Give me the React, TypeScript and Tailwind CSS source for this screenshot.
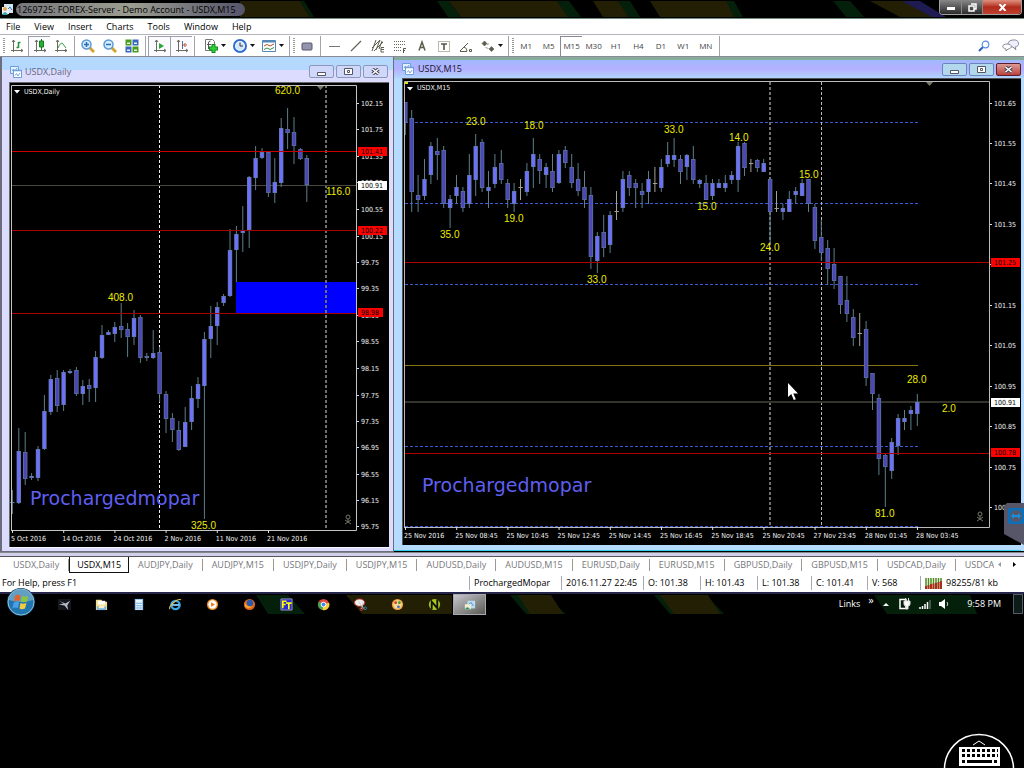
import React from 'react';
import clsx from 'clsx';

type CandleRow = [high: number, top: number, bottom: number, low: number, kind: 'u' | 'd' | 'x'];

const dailyCandles: CandleRow[] = [
    [490, 502, 503, 514, 'u'], [428, 451, 503, 504, 'u'], [432, 452, 479, 485, 'd'], [473, 476, 478, 480, 'u'],
    [446, 449, 478, 481, 'u'], [395, 411, 449, 450, 'u'], [375, 379, 412, 415, 'u'], [370, 378, 406, 412, 'd'],
    [370, 372, 405, 411, 'u'], [369, 371, 373, 374, 'u'], [367, 370, 394, 396, 'd'], [380, 386, 394, 405, 'u'],
    [379, 385, 389, 402, 'd'], [351, 357, 388, 402, 'u'], [325, 335, 358, 359, 'u'], [330, 332, 335, 335, 'u'],
    [322, 327, 334, 342, 'u'], [303, 326, 330, 338, 'd'], [323, 329, 337, 357, 'd'], [310, 318, 337, 345, 'u'],
    [315, 317, 358, 363, 'd'], [353, 356, 358, 361, 'd'], [330, 353, 358, 359, 'u'], [347, 352, 394, 402, 'd'],
    [391, 394, 419, 433, 'd'], [413, 418, 430, 442, 'd'], [421, 430, 450, 451, 'd'], [407, 422, 447, 447, 'u'],
    [386, 398, 422, 430, 'u'], [377, 384, 399, 408, 'u'], [332, 339, 386, 519, 'u'], [306, 326, 339, 358, 'u'],
    [302, 307, 326, 345, 'u'], [294, 296, 303, 306, 'u'], [229, 250, 296, 297, 'u'], [226, 234, 250, 282, 'u'],
    [206, 230, 233, 252, 'u'], [176, 177, 230, 248, 'u'], [146, 158, 178, 190, 'u'], [148, 152, 158, 159, 'u'],
    [151, 152, 193, 197, 'd'], [158, 182, 193, 203, 'u'], [118, 128, 183, 187, 'u'], [108, 129, 133, 149, 'd'],
    [117, 132, 146, 164, 'd'], [148, 149, 159, 160, 'd'], [155, 158, 185, 202, 'd'],
];

const m15Candles: CandleRow[] = [
    [102, 102, 122, 135, 'd'], [110, 118, 192, 212, 'd'], [175, 195, 200, 212, 'd'], [159, 179, 196, 200, 'u'],
    [142, 146, 175, 184, 'u'], [138, 151, 155, 180, 'd'], [146, 150, 204, 208, 'd'], [195, 199, 208, 228, 'u'],
    [175, 187, 196, 204, 'u'], [187, 191, 208, 212, 'd'], [154, 175, 204, 208, 'u'], [134, 146, 180, 196, 'u'],
    [139, 142, 188, 192, 'd'], [171, 187, 191, 208, 'u'], [154, 167, 184, 188, 'u'], [150, 163, 180, 184, 'd'],
    [179, 183, 200, 208, 'd'], [183, 191, 204, 212, 'u'], [179, 187, 187, 200, 'x'], [163, 171, 192, 196, 'u'],
    [138, 154, 167, 188, 'u'], [154, 159, 171, 184, 'd'], [163, 167, 175, 188, 'u'], [154, 171, 188, 192, 'd'],
    [150, 154, 183, 184, 'u'], [146, 150, 163, 168, 'd'], [154, 167, 183, 188, 'd'], [163, 179, 191, 196, 'd'],
    [171, 187, 200, 208, 'd'], [187, 195, 257, 269, 'd'], [232, 236, 261, 273, 'u'], [215, 232, 248, 257, 'd'],
    [211, 215, 245, 253, 'u'], [191, 211, 211, 220, 'x'], [171, 179, 208, 212, 'u'], [171, 175, 188, 196, 'd'],
    [179, 183, 188, 208, 'd'], [183, 191, 195, 208, 'd'], [171, 179, 192, 204, 'u'], [167, 183, 183, 192, 'x'],
    [159, 167, 188, 192, 'u'], [142, 155, 164, 167, 'u'], [138, 155, 160, 167, 'u'], [155, 159, 172, 184, 'd'],
    [154, 155, 167, 180, 'u'], [146, 159, 180, 184, 'd'], [179, 180, 184, 188, 'u'], [175, 183, 200, 200, 'd'],
    [179, 183, 196, 200, 'u'], [179, 183, 188, 188, 'u'], [175, 183, 188, 192, 'u'], [171, 175, 180, 184, 'u'],
    [142, 146, 180, 192, 'u'], [142, 143, 168, 176, 'd'], [159, 163, 163, 172, 'x'], [159, 160, 168, 172, 'd'],
    [159, 163, 172, 172, 'u'], [179, 179, 212, 242, 'd'], [191, 208, 208, 212, 'x'], [204, 208, 212, 220, 'u'],
    [191, 199, 212, 212, 'u'], [187, 191, 195, 204, 'u'], [179, 183, 196, 196, 'u'], [179, 179, 204, 212, 'd'],
    [204, 207, 241, 249, 'd'], [220, 237, 253, 261, 'd'], [240, 248, 269, 285, 'd'], [248, 264, 281, 289, 'd'],
    [276, 276, 305, 314, 'd'], [276, 300, 314, 322, 'd'], [309, 317, 338, 346, 'd'], [313, 333, 333, 346, 'x'],
    [321, 329, 378, 386, 'd'], [373, 373, 394, 410, 'd'], [394, 398, 459, 475, 'd'], [454, 455, 467, 507, 'd'],
    [438, 442, 471, 479, 'u'], [414, 418, 446, 455, 'u'], [410, 418, 422, 430, 'u'], [406, 410, 414, 430, 'u'],
    [394, 402, 414, 426, 'u'],
];

type Label = [text: string, x: number, y: number];

const dailyPrices: [string, number][] = [
    ['102.15', 103], ['101.75', 129], ['101.35', 156], ['100.95', 182], ['100.55', 209], ['100.15', 236],
    ['99.75', 262], ['99.35', 288], ['98.95', 315], ['98.55', 341], ['98.15', 368], ['97.75', 395],
    ['97.35', 421], ['96.95', 447], ['96.55', 474], ['96.15', 500], ['95.75', 526],
];

const m15Prices: [string, number][] = [
    ['101.65', 103], ['101.55', 143], ['101.45', 183], ['101.35', 224], ['101.25', 264], ['101.15', 305],
    ['101.05', 345], ['100.95', 386], ['100.85', 426], ['100.75', 467], ['100.65', 507],
];

const dailyDates = ['5 Oct 2016', '14 Oct 2016', '24 Oct 2016', '2 Nov 2016', '11 Nov 2016', '21 Nov 2016'];
const m15Dates = [
    '25 Nov 2016', '25 Nov 08:45', '25 Nov 10:45', '25 Nov 12:45', '25 Nov 14:45', '25 Nov 16:45',
    '25 Nov 18:45', '25 Nov 20:45', '27 Nov 23:45', '28 Nov 01:45', '28 Nov 03:45',
];

const dailySwings: Label[] = [
    ['408.0', 108, 301], ['325.0', 191, 529], ['620.0', 275, 94], ['116.0', 326, 195],
];
const m15Swings: Label[] = [
    ['35.0', 440, 238], ['23.0', 466, 125], ['19.0', 504, 222], ['18.0', 524, 129], ['33.0', 587, 283],
    ['33.0', 664, 133], ['15.0', 697, 210], ['14.0', 729, 141], ['24.0', 760, 251], ['15.0', 799, 178],
    ['81.0', 875, 517], ['28.0', 907, 383], ['2.0', 942, 412],
];

const Candles = ({ rows, start }: { rows: CandleRow[]; start: number }) => (
    <g>
        {rows.map(([high, top, bottom, low, kind], i) => {
            const x = start + i * 6.4;
            if (kind === 'x') {
                return <path key={i} d={`M${x} ${high}V${low}M${x - 2} ${top + 0.5}h4.4`} stroke="#a3a392" />;
            }
            const height = Math.max(bottom - top, 1);
            return (
                <g key={i}>
                    <path d={`M${x} ${high}V${low}`} stroke="#5d7e8c" />
                    <rect x={x - 2.2} y={top} width={4.4} height={height} fill="#5c7b98" />
                    <rect x={x - 1.5} y={top + 0.6} width={3} height={Math.max(height - 1.2, 0.5)} fill={kind === 'u' ? '#6f6fff' : '#4c46b8'} />
                </g>
            );
        })}
    </g>
);

const PriceAxis = ({ prices, x }: { prices: [string, number][]; x: number }) => (
    <g fill="#f4f4f4" fontSize={7}>
        {prices.map(([text, y]) => (
            <g key={text}>
                <path d={`M${x} ${y + 0.5}h2`} stroke="#ddd" />
                <text x={x + 4} y={y + 3}>{text}</text>
            </g>
        ))}
    </g>
);

const PriceTag = ({ x, y, text, width = 29, white }: { x: number; y: number; text: string; width?: number; white?: boolean }) => (
    <g>
        <rect x={x} y={y - 4} width={width} height={9} fill={white ? '#fff' : '#f00'} />
        <text x={x + 3} y={y + 3} fontSize={7} fill="#000">{text}</text>
    </g>
);

const DateAxis = ({ dates, x, y }: { dates: string[]; x: number; y: number }) => (
    <g fill="#f4f4f4" fontSize={7}>
        {dates.map((text, i) => (
            <g key={text}>
                <path d={`M${x + 0.5 + i * 51.2} ${y}v3`} stroke="#ddd" />
                <text x={x - 1 + i * 51.2} y={y + 11}>{text}</text>
            </g>
        ))}
    </g>
);

const Swings = ({ labels }: { labels: Label[] }) => (
    <g fill="#ecec00" fontSize={10} className="font-['Liberation_Sans',Arial,sans-serif]">
        {labels.map(([text, x, y]) => <text key={`${text}${x}`} x={x} y={y}>{text}</text>)}
    </g>
);

const Skull = ({ x, y }: { x: number; y: number }) => (
    <g stroke="#77776a" fill="none">
        <circle cx={x} cy={y} r={2} />
        <path d={`M${x - 3} ${y + 3}l6 4M${x + 3} ${y + 3}l-6 4M${x - 1} ${y + 3}h2`} />
    </g>
);

const chartClass = "block h-auto w-full bg-black font-['DejaVu_Sans_Condensed','DejaVu_Sans',Tahoma,sans-serif]";

const DailyChart = () => (
    <svg viewBox="9 82 380 466" className={chartClass} role="img" aria-label="USDX daily chart">
        <path d="M9 82.5H389M9.5 82V548" stroke="#686868" />
        <path d="M9 547.5H389" stroke="#f4f4ff" />
        <rect x={236} y={282} width={120} height={31} fill="#00f" />
        <path d="M159.5 85V530" stroke="#eee" strokeDasharray="3 2" />
        <path d="M326 85V530" stroke="#707070" strokeWidth={2} strokeDasharray="3 2" />
        <path d="M12 185.5H356" stroke="#4a4a42" />
        <Candles rows={dailyCandles} start={12.4} />
        <path d="M12 151.5H356" stroke="#c80000" />
        <path d="M12 230.5H356M12 313.5H356" stroke="#a80000" />
        <path d="M11.5 530V85.5H356.5V530.5H11" fill="none" stroke="#c4c4c4" />
        <path d="M317 86h7l-3.500 4z" fill="#77776a" />
        <path d="M14 90h6l-3 3.500z" fill="#fff" />
        <text x={24} y={94} fontSize={7} fill="#f4f4f4">USDX,Daily</text>
        <PriceAxis prices={dailyPrices} x={357} />
        <PriceTag x={358} y={151} text="101.41" />
        <PriceTag x={358} y={185} text="100.91" white />
        <PriceTag x={358} y={230} text="100.22" />
        <PriceTag x={358} y={312} text="98.98" width={25} />
        <DateAxis dates={dailyDates} x={12} y={530} />
        <Swings labels={dailySwings} />
        <text x={30} y={505} fontSize={19} fill="#5f5ff0" className="font-['DejaVu_Sans',Verdana,sans-serif]">Prochargedmopar</text>
        <Skull x={348} y={517} />
    </svg>
);

const M15Chart = () => (
    <svg viewBox="402 78 619 467" className={chartClass} role="img" aria-label="USDX M15 chart">
        <path d="M402 78.500H1021M402.500 78V545" stroke="#555" />
        <path d="M405 122.5H918M405 203.5H918M405 284.5H918M405 446.500H918M405 526.500H918" stroke="#3a5ad8" strokeDasharray="3 2" />
        <path d="M770 82V527" stroke="#707070" strokeWidth={2} strokeDasharray="3 2" />
        <path d="M821.5 82V527" stroke="#bbb" strokeDasharray="3 2" />
        <path d="M405 365.5H918" stroke="#857312" />
        <path d="M405 402H989" stroke="#33332a" strokeWidth={2} />
        <clipPath id="m15-plot"><path d="M405 82h584v445H405z" /></clipPath>
        <g clipPath="url(#m15-plot)">
            <Candles rows={m15Candles} start={405.3} />
        </g>
        <path d="M405 262.5H989M405 453.5H989" stroke="#b00000" />
        <path d="M404.5 527V81.5H989.5V527.5H404" fill="none" stroke="#bbb" />
        <path d="M926 82h7l-3.500 4z" fill="#77776a" />
        <path d="M407 87h6l-3 3.500z" fill="#fff" />
        <path d="M405 83h3" stroke="#e2e200" strokeWidth={2} />
        <text x={417} y={90} fontSize={7} fill="#f4f4f4">USDX,M15</text>
        <PriceAxis prices={m15Prices} x={990} />
        <PriceTag x={991} y={262} text="101.25" />
        <PriceTag x={991} y={402} text="100.91" white />
        <PriceTag x={991} y={452} text="100.78" />
        <DateAxis dates={m15Dates} x={405} y={527} />
        <Swings labels={m15Swings} />
        <text x={422} y={492} fontSize={19} fill="#5f5ff0" className="font-['DejaVu_Sans',Verdana,sans-serif]">Prochargedmopar</text>
        <Skull x={980} y={514} />
        <path d="M788 383v14l3.300-3 2.500 6 2-.8-2.500-5.700h4.700z" fill="#fff" />
    </svg>
);

const ChartIcon = () => (
    <svg viewBox="0 0 12 12" className="size-3 shrink-0">
        <path d="M.5.500h8v7h-8z" fill="#dff0ff" stroke="#6a9fdc" />
        <path d="M3.500 4.500h8v7h-8z" fill="#fff" stroke="#6a9fdc" />
        <path d="M3 4.500h9" stroke="#6a9fdc" strokeWidth={1.500} />
        <path d="M2 5l1.500-2L5 5l2-3M5 9.500l1.500-2 1.500 2.500 2-3" fill="none" stroke="#7aa4d0" />
    </svg>
);

const WindowButtons = ({ active }: { active?: boolean }) => {
    const base = 'flex h-[13px] w-[25px] items-center justify-center rounded-xs border';
    const plain = active ? 'border-[#6a86b8] bg-[#b2d8ee]' : 'border-[#8c98b8] bg-[#cfd8fb]';
    return (
        <div className="flex gap-[2px]">
            <button aria-label="Minimize" className={clsx(base, plain, 'items-end pb-[1px]')}>
                <svg viewBox="0 0 9 4" className="h-[4px] w-[9px]"><path d="M.5.500h8v3h-8z" fill="#fff" stroke="#556" /></svg>
            </button>
            <button aria-label="Maximize" className={clsx(base, plain)}>
                <svg viewBox="0 0 9 7" className="h-[7px] w-[9px]"><path d="M.5.500h8v6h-8zM3.500 2.500h2v2h-2z" fill="#fff" stroke="#556" /></svg>
            </button>
            <button aria-label="Close" className={clsx(base, active ? 'border-[#5a2030] bg-linear-to-b from-[#dc9a94] to-[#b84040]' : plain)}>
                <svg viewBox="0 0 9 7" className="h-[7px] w-[9px]">
                    <path d="M1.500 1l6 5M7.500 1l-6 5" stroke="#445" strokeWidth={3.500} />
                    <path d="M1.500 1l6 5M7.500 1l-6 5" stroke="#fff" strokeWidth={1.500} />
                </svg>
            </button>
        </div>
    );
};

const TitleBar = () => (
    <header className="relative flex h-[19px] items-start border-b border-[#6d8a7a] bg-black">
        <svg viewBox="0 0 1024 17" preserveAspectRatio="none" className="absolute inset-0 h-[17px] w-full">
            <path d="M240 1h60l10 16h-70z" fill="#231f05" />
            <path d="M300 1h4l10 16h-4z" fill="#04200a" />
            <path d="M437 1h12l12 16h-13z" fill="#04200a" />
            <path d="M449 1h108l12 16h-108z" fill="#231f05" />
            <path d="M557 1h12l12 16h-13z" fill="#04200a" />
            <path d="M593 1h25l15 16h-30z" fill="#231f05" />
            <path d="M618 1h12l10 16h-12z" fill="#04200a" />
            <path d="M650 1h80l10 16h-80z" fill="#231f05" />
            <path d="M726 1h8l9 16h-9z" fill="#04200a" />
            <path d="M833 1h17l14 16h-18z" fill="#04200a" />
            <path d="M870 1h40l30 16h-40z" fill="#231f05" />
            <path d="M902 1h18l26 16h-14z" fill="#1d1b52" />
        </svg>
        <div className="relative flex min-w-0 flex-1 items-center gap-[2px] pt-[3px] pl-[2px]">
            <svg viewBox="0 0 12 12" className="size-3 shrink-0">
                <path d="M2 0h9v9H2z" fill="#cfe6f5" />
                <path d="M0 3h7v7H0z" fill="#eef" />
                <circle cx={3} cy={5} r={2} fill="#e2a548" />
                <path d="M0 11q3-6 6 0z" fill="#3a9" />
                <path d="M6 5l2-2 2 3" stroke="#47a" fill="none" />
            </svg>
            <h1 className="truncate rounded-full bg-linear-to-r from-[#77777c] via-[#9c9d90] to-[#55546a] pr-[9px] pl-[1px] text-[9px] leading-[13px] text-black">
                1269725: FOREX-Server - Demo Account - USDX,M15
            </h1>
        </div>
        <div className="relative mr-[2px] flex h-[15px] overflow-hidden rounded-b-sm border border-t-0 border-[#a0a0a0]">
            <button aria-label="Minimize" className="flex w-[22px] items-end justify-center border-r border-[#888] bg-linear-to-b from-[#888] to-[#2c2c2c] pb-1">
                <span className="h-[3px] w-2 bg-white" />
            </button>
            <button aria-label="Restore" className="flex w-[21px] items-center justify-center border-r border-[#888] bg-linear-to-b from-[#888] to-[#2c2c2c]">
                <svg viewBox="0 0 9 9" className="size-[9px]"><path d="M3 1h5v5H6M1 3h5v5H1z" fill="none" stroke="#fff" strokeWidth={1.500} /></svg>
            </button>
            <button aria-label="Close" className="flex w-[38px] items-center justify-center bg-linear-to-b from-[#e09080] via-[#b02a1a] to-[#c04030]">
                <svg viewBox="0 0 9 7" className="h-[7px] w-[9px]"><path d="M1.500 0l6 7M7.500 0l-6 7" stroke="#fff" strokeWidth={2} /></svg>
            </button>
        </div>
    </header>
);

const Axes = () => <path d="M3.500 1v12M1 11.500h12M2 3l1.500-2L5 3M11 10l2 1.500-2 1.500" fill="none" stroke="#6b6b60" />;

const icons: Record<string, React.ReactNode> = {
    'Bar chart': <><Axes /><path d="M8.500 3v6M8.500 3.500h2M6.500 8.500h2" stroke="#2a8f3a" strokeWidth={1.500} /></>,
    'Candlesticks': <><Axes /><path d="M8.500 0v11" stroke="#177a22" /><path d="M6.500 2h4v6h-4z" fill="#22b034" stroke="#177a22" /></>,
    'Line chart': <><Axes /><path d="M4 9q3-7 5-4l3 4" fill="none" stroke="#3a9a4a" /></>,
    'Zoom in': <><path d="M8 8l5 5" stroke="#d3a52e" strokeWidth={3} /><circle cx={5.500} cy={5.500} r={4.500} fill="#d5edff" stroke="#5b9ad4" strokeWidth={1.500} /><path d="M3 5.500h5M5.500 3v5" stroke="#2b6cb8" strokeWidth={1.500} /></>,
    'Zoom out': <><path d="M8 8l5 5" stroke="#d3a52e" strokeWidth={3} /><circle cx={5.500} cy={5.500} r={4.500} fill="#d5edff" stroke="#5b9ad4" strokeWidth={1.500} /><path d="M3 5.500h5" stroke="#2b6cb8" strokeWidth={1.500} /></>,
    'Tile windows': <><path d="M.5.500h6v6h-6zM7.500 7.500h6v6h-6z" fill="#4a9c20" /><path d="M7.500.500h6v6h-6zM.5 7.500h6v6h-6z" fill="#3a68c0" /><path d="M2 3.500h3v1.500H2zM9 3.500h3v1.500H9zM2 10.500h3V12H2zM9 10.500h3V12H9z" fill="#e8f4e8" /></>,
    'Auto scroll': <><Axes /><path d="M6 4l5 3-5 3z" fill="#27a83a" /></>,
    'Chart shift': <><Axes /><path d="M7.500 2v8" stroke="#4a6ea8" /><path d="M12 6H9M10.500 4L8.500 6l2 2" stroke="#c04a20" fill="none" /></>,
    'Indicators': <><path d="M1.500.500h7l2 2v9h-9z" fill="#fff" stroke="#777" /><path d="M4.500 10V4q0-2 2-2M3 5.500h4" stroke="#555" fill="none" /><path d="M9.500 5v9M5 9.500h9" stroke="#138a1c" strokeWidth={4} /><path d="M9.500 6v7M6 9.500h7" stroke="#2ed23a" strokeWidth={2} /></>,
    'Periods': <><circle cx={7} cy={7} r={6} fill="#fff" stroke="#2d6bcf" strokeWidth={2} /><circle cx={7} cy={7} r={4} fill="#cfe6fb" /><path d="M7 3.500V7h3" fill="none" stroke="#335" /></>,
    'Templates': <><path d="M.5 1.500h13v11H.5z" fill="#fff" stroke="#5287b8" /><path d="M1 2.500h12" stroke="#5287b8" strokeWidth={2} /><path d="M2 7l3-1.500L8 7l4-2" stroke="#b5502a" fill="none" /><path d="M2 10.500l3-1.500 3 1.500 4-2" stroke="#3a8a4a" fill="none" /></>,
    'Objects': <rect x={2} y={4} width={10} height={7} rx={1} fill="#9494ae" stroke="#55556a" />,
    'Horizontal line': <path d="M2 7.500h11" stroke="#777" />,
    'Trendline': <path d="M2 12L12 2" stroke="#66665a" strokeWidth={1.200} />,
    'Channel': <path d="M1 9l8-8M3 12l9-9M1 12l4-11M5 11L9 1M8 10l3-8M10 8.500h3M10 10.500h3M10 13h3M10 8.500v4.500" stroke="#5c5c4c" fill="none" />,
    'Fibonacci': <><path d="M1 2.500h12M1 5.500h12M1 8.500h8M1 11.500h8" stroke="#66665a" strokeDasharray="1 1" /><path d="M10.500 14V9.500H13M10 11.500h2" stroke="#55554a" fill="none" /></>,
    'Text': <path d="M4 11.500L7 3l3 8.500M5 8.500h4" stroke="#5c5c4c" strokeWidth={1.500} fill="none" />,
    'Text label': <><path d="M1.500 2.500h11v10h-11z" fill="none" stroke="#77775a" strokeDasharray="1 1" /><path d="M4 5h6M7 5v6" stroke="#55554a" strokeWidth={1.600} /></>,
    'Angle': <path d="M1 12.500h7M1 12l8-8M5 8q3 1 3 4M10.500 10.500h2v2h-2z" stroke="#5c5c4c" fill="none" />,
    'Arrows': <path d="M1 4.500l2.500-2.500L6 4.500 3.500 7zM8 10l2.500-2.500L13 10l-2.500 2.500zM6 6l2-1.500M4.500 8.500l3 1" fill="#5c5c4c" stroke="#5c5c4c" strokeWidth={0.600} />,
};

const ToolButton = ({ name, menu, pressed }: { name: string; menu?: boolean; pressed?: boolean }) => (
    <button
        aria-label={name}
        className={clsx(
            'flex h-[20px] shrink-0 items-center justify-center gap-[3px]',
            menu ? 'w-[29px]' : 'w-[22px]',
            pressed && 'border-t border-l border-[#a0a0a8] bg-[#fafaff]',
        )}
    >
        <svg viewBox="0 0 14 14" className="size-[14px]">{icons[name]}</svg>
        {menu && <svg viewBox="0 0 5 3" className="h-[3px] w-[5px]"><path d="M0 0h5L2.500 3z" fill="#111" /></svg>}
    </button>
);

const Separator = () => <div className="mx-[2px] h-[20px] w-px shrink-0 bg-[#a4a4ac]" />;
const Grip = () => <div className="mx-[1px] h-[16px] w-[2px] shrink-0 bg-[repeating-linear-gradient(#999_0_1px,#fff_1px_2px)]" />;

const Toolbar = () => (
    <div className="flex h-[22px] items-center overflow-hidden border-b border-[#8a8a94] bg-white pl-[2px]">
        <Grip />
        <ToolButton name="Bar chart" />
        <ToolButton name="Candlesticks" pressed />
        <ToolButton name="Line chart" />
        <Separator />
        <ToolButton name="Zoom in" />
        <ToolButton name="Zoom out" />
        <ToolButton name="Tile windows" />
        <Separator />
        <ToolButton name="Auto scroll" pressed />
        <ToolButton name="Chart shift" pressed />
        <Separator />
        <div className="flex pl-[3px]">
            <ToolButton name="Indicators" menu />
            <ToolButton name="Periods" menu />
            <ToolButton name="Templates" menu />
        </div>
        <Separator />
        <Grip />
        <ToolButton name="Objects" />
        <Separator />
        <ToolButton name="Horizontal line" />
        <ToolButton name="Trendline" />
        <ToolButton name="Channel" />
        <ToolButton name="Fibonacci" />
        <ToolButton name="Text" />
        <ToolButton name="Text label" />
        <ToolButton name="Angle" />
        <ToolButton name="Arrows" menu />
        <Separator />
        <Grip />
        <div className="grid w-[202px] shrink-0 grid-cols-9">
            {['M1', 'M5', 'M15', 'M30', 'H1', 'H4', 'D1', 'W1', 'MN'].map(period => (
                <button
                    key={period}
                    className={clsx(
                        'h-[20px] text-center text-[8px] text-[#444]',
                        period === 'M15' && 'border-t border-l border-[#8a8a94]',
                    )}
                >
                    {period}
                </button>
            ))}
        </div>
        <Separator />
        <div className="ml-auto flex items-center gap-[12px] pr-[5px]">
            <button aria-label="Search">
                <svg viewBox="0 0 12 12" className="size-3">
                    <path d="M1 11l4-4" stroke="#2a5fc0" strokeWidth={2} />
                    <circle cx={7.500} cy={4.500} r={3.300} fill="#fff" stroke="#5a90e4" strokeWidth={1.200} />
                </svg>
            </button>
            <button aria-label="Messages">
                <svg viewBox="0 0 17 13" className="h-[13px] w-[17px]">
                    <path d="M11 1c7-1 7 7 2 7l1 3-3-3C4 8 5 1 11 1z" fill="#eef" stroke="#8a8a98" />
                    <path d="M5 5c6 0 5 5 1 5l-2 2 0-2C-1 9 0 5 5 5z" fill="#fff" stroke="#8a8a98" />
                </svg>
            </button>
        </div>
    </div>
);

const tabs = [
    'USDX,Daily', 'USDX,M15', 'AUDJPY,Daily', 'AUDJPY,M15', 'USDJPY,Daily', 'USDJPY,M15', 'AUDUSD,Daily',
    'AUDUSD,M15', 'EURUSD,Daily', 'EURUSD,M15', 'GBPUSD,Daily', 'GBPUSD,M15', 'USDCAD,Daily', 'USDCAD,M15',
];

const ChartTabs = () => (
    <div className="flex h-[18px] items-start border-t border-[#55555c] bg-white">
        <div className="flex min-w-0 flex-1 items-center overflow-hidden pl-[4px]">
            {tabs.map(tab => (
                <button
                    key={tab}
                    className={clsx(
                        'shrink-0 text-[9px] whitespace-nowrap',
                        tab === 'USDX,M15'
                            ? 'h-[16px] border-r border-b border-l border-[#111] px-[7px] leading-[15px] text-black'
                            : 'h-[12px] border-r border-[#9a9a90] px-[9px] leading-[12px] text-[#77777c]',
                    )}
                >
                    {tab}
                </button>
            ))}
        </div>
        <div className="flex h-[15px] w-[30px] items-center justify-between pr-[8px] pl-[4px] text-black">
            <button aria-label="Scroll left"><svg viewBox="0 0 3 5" className="h-[5px] w-[3px]"><path d="M3 0v5L0 2.500z" fill="#99a" /></svg></button>
            <button aria-label="Scroll right"><svg viewBox="0 0 3 5" className="h-[5px] w-[3px]"><path d="M0 0v5l3-2.500z" fill="#000" /></svg></button>
        </div>
    </div>
);

const Cell = ({ children, className }: { children: React.ReactNode; className: string }) => (
    <span className={clsx('h-[14px] shrink-0 border-l border-[#a8a8b4] pl-[4px] whitespace-nowrap', className)}>{children}</span>
);

const StatusBar = () => (
    <footer className="flex h-[18px] items-center bg-white text-[9px] leading-[14px] text-black">
        <span className="min-w-0 flex-1 truncate pl-[2px]">For Help, press F1</span>
        <Cell className="w-[92px]">ProchargedMopar</Cell>
        <Cell className="w-[82px]">2016.11.27 22:45</Cell>
        <Cell className="w-[57px]">O: 101.38</Cell>
        <Cell className="w-[57px]">H: 101.43</Cell>
        <Cell className="w-[54px]">L: 101.38</Cell>
        <Cell className="w-[56px]">C: 101.41</Cell>
        <Cell className="w-[53px]">V: 568</Cell>
        <Cell className="flex w-[104px] items-center gap-[3px]">
            <svg viewBox="0 0 18 11" className="h-[11px] w-[18px]">
                <path d="M1 0v11M3.500 0v11M6 0v11M8.500 0v11M11 0v11M13.500 0v11M16 0v11" stroke="#4c8a1c" strokeWidth={1.500} />
                <path d="M1 8v3M3.500 7v4M6 6v5M8.500 5.500v5.500M11 5v6M13.500 4v7M16 3v8" stroke="#a83018" strokeWidth={2} />
            </svg>
            98255/81 kb
        </Cell>
    </footer>
);

const StartOrb = () => (
    <svg viewBox="0 0 30 28" className="h-[28px] w-[30px]">
        <circle cx={15} cy={14} r={14} fill="#123a5c" />
        <circle cx={15} cy={14} r={13} fill="#2276b0" stroke="#8fc0dc" />
        <path d="M3 12a12 11 0 0 1 24 0q-12 4-24 0z" fill="#7fb0cc" opacity={0.7} />
        <path d="M9 8q3-2 5.500-.5L13.500 13q-3-1-5.500.5z" fill="#e2632a" />
        <path d="M16 8q3 1.500 6 0L21 13.500q-3 1.500-6 0z" fill="#8cc63a" />
        <path d="M7.500 15q3-2 5.500-.5L12 20q-3-1-5.500.5z" fill="#4aa0e8" />
        <path d="M14.500 15q3 1.500 6 0l-1.500 5.500q-3 1.500-5.500 0z" fill="#f4cc40" />
    </svg>
);

const apps: [string, React.ReactNode][] = [
    ['Jet', <><path d="M0 1h14v12H0z" fill="#15151c" /><path d="M1 3l7 3 5-3-3 5 1 5-4-5-6-1 5-1z" fill="#b8bcc8" /></>],
    ['Explorer', <><path d="M1 2h6l1 2h5v9H1z" fill="#f2dd88" /><path d="M3 3h8v4H3z" fill="#fff" /><path d="M2 9h10v4H2z" fill="#7ab4e0" /><path d="M4 8h6v3H4z" fill="#fbf0c0" /></>],
    ['Calculator', <><path d="M3 1h9v12H3z" fill="#8fc0ee" /><path d="M4 2h7v3H4z" fill="#eaf6ff" /><path d="M4 7h7M4 9.500h7M4 12h7" stroke="#fff" strokeDasharray="2 .5" /></>],
    ['Internet Explorer', <><circle cx={7} cy={7.500} r={4.500} fill="none" stroke="#38a4ea" strokeWidth={2.500} /><path d="M3 7.500h8" stroke="#7cc8f8" strokeWidth={2} /><path d="M1 12C-1 9 9 0 13 2" stroke="#e8c040" fill="none" strokeWidth={1.200} /></>],
    ['Media Player', <><circle cx={7} cy={7} r={6} fill="#f08a20" /><circle cx={7} cy={7} r={4.500} fill="#fff" /><path d="M5.500 4.500L9.500 7l-4 2.500z" fill="#e8721a" /></>],
    ['Firefox', <><circle cx={7} cy={7} r={6} fill="#e0661c" /><circle cx={7.500} cy={5.500} r={3.500} fill="#2a5ab0" /><path d="M2 4q1 6 8 5-4 4-8 0z" fill="#f8a830" /></>],
    ['Forex Tester', <><path d="M1 1h12v12H1z" fill="#2a2ad8" stroke="#99a" /><path d="M3 11V3.500h4M3 7h3M6.500 5.500h6M9.500 5.500V12" stroke="#ff0" strokeWidth={1.800} fill="none" /></>],
    ['Chrome', <><circle cx={7} cy={7} r={6} fill="#e0463a" /><path d="M7 7L2 4a6 6 0 0 0 4 9z" fill="#3aa852" /><path d="M7 7l6-2a6 6 0 0 1-7 8z" fill="#f8cc3a" /><circle cx={7} cy={7} r={2.600} fill="#4a8af0" stroke="#fff" /></>],
    ['Snipping Tool', <><ellipse cx={6} cy={5} rx={5.500} ry={4} fill="#eee" stroke="#c03030" /><path d="M5 4l6 8M10 4L8 12" stroke="#ccc" /><circle cx={12} cy={11} r={1.500} fill="none" stroke="#38a" /><circle cx={8} cy={12} r={1.500} fill="none" stroke="#c33" /></>],
    ['Paint', <><circle cx={7} cy={7} r={6} fill="#f2a440" /><circle cx={7} cy={7} r={4.500} fill="#f8d890" /><circle cx={5} cy={5} r={1.500} fill="#d23a2a" /><circle cx={9} cy={5} r={1.500} fill="#3a9a3a" /><circle cx={8} cy={9.500} r={1.500} fill="#3a6ad0" /></>],
    ['NinjaTrader', <><circle cx={7} cy={7} r={6} fill="#a8c818" /><path d="M4 12V4l6 7V2" stroke="#111" strokeWidth={2} fill="none" /></>],
];

const Taskbar = () => (
    <nav className="relative flex h-[24px] items-start border-t-2 border-[#26264a] bg-black text-white">
        <svg viewBox="0 0 1024 22" preserveAspectRatio="none" className="absolute inset-0 h-[21px] w-full">
            <path d="M256 1h32l17 20h-37z" fill="#04200a" />
            <path d="M346 1h106v20h-90z" fill="#231f05" />
            <path d="M510 1h34l22 20h-40z" fill="#04200a" />
            <path d="M518 1h33l12 20h-33z" fill="#231f05" />
            <path d="M654 1h52l18 20h-54z" fill="#04200a" />
            <path d="M660 1h48l12 20h-46z" fill="#231f05" />
            <path d="M874 1h96l7 20h-90z" fill="#04200a" />
        </svg>
        <button aria-label="Start" className="relative -mt-[6px] ml-[6px]"><StartOrb /></button>
        <div className="relative flex pt-[2px] pl-[10px]">
            {apps.map(([name, icon]) => (
                <button key={name} aria-label={name} className="flex h-[16px] w-[37px] items-center justify-center">
                    <svg viewBox="0 0 14 14" className="size-[13px]">{icon}</svg>
                </button>
            ))}
        </div>
        <button aria-label="MetaTrader" className="relative flex h-[21px] w-[33px] items-center justify-center border border-[#a8a8b4] bg-linear-to-br from-[#c8c8d0] to-[#5c5c54]">
            <svg viewBox="0 0 14 14" className="size-[12px]">
                <path d="M4 2h9v9H4z" fill="#b8dcf4" />
                <path d="M1 6h7v6H1z" fill="#f4ead0" />
                <path d="M1 12q3-5 6 0z" fill="#2a9a6a" />
                <path d="M6 6l2-2 3 4" stroke="#4a80b8" fill="none" />
            </svg>
        </button>
        <div className="relative ml-auto flex h-[20px] items-center text-[9px]">
            <a href="#links" className="mr-[8px]">Links</a>
            <span className="-mt-[8px] w-[15px] text-[11px]">»</span>
            <button aria-label="Show hidden icons" className="w-[16px]"><svg viewBox="0 0 6 3" className="h-[3px] w-[6px]"><path d="M0 3h6L3 0z" fill="#fff" /></svg></button>
            <svg viewBox="0 0 12 12" className="mr-[8px] size-3">
                <path d="M1 1.500h6v9H1z" fill="none" stroke="#fff" strokeWidth={1.500} />
                <path d="M5 3h6v3q0 2-2 2v3H7V8Q5 8 5 6zM6.500 0v3M9.500 0v3" fill="#fff" stroke="#ddd" />
            </svg>
            <svg viewBox="0 0 12 10" className="mr-[8px] h-[10px] w-[12px]">
                <path d="M1 8v2M3.500 7v3M6 5v5M8.500 3v7" stroke="#fff" strokeWidth={1.500} />
                <path d="M11 1v9" stroke="#888" />
            </svg>
            <svg viewBox="0 0 10 10" className="mr-[18px] size-[10px]">
                <path d="M0 3h2l4-3v10L2 7H0z" fill="#fff" />
                <path d="M8 3q1.500 2 0 4" stroke="#ccc" fill="none" />
            </svg>
            <time className="mr-[12px] whitespace-nowrap">9:58 PM</time>
            <button aria-label="Show desktop" className="mr-[1px] h-[20px] w-[10px] border border-[#555a6a] bg-[#0c1c18]" />
        </div>
    </nav>
);

const App = () => (
    <div className="relative flex min-h-screen flex-col overflow-hidden bg-black font-['Open_Sans','Noto_Sans',sans-serif]">
        <TitleBar />
        <div className="flex h-[16px] items-center gap-[14px] border-b border-[#b4b4c0] bg-white pl-[6px] text-[9px] text-black">
            {['File', 'View', 'Insert', 'Charts', 'Tools', 'Window', 'Help'].map(item => <button key={item}>{item}</button>)}
        </div>
        <Toolbar />

        {/* Chart windows */}
        <main className="grid grid-cols-[394fr_630fr] items-start bg-[#a9a9a0]">
            <section className="self-stretch border-r border-b border-l-2 border-[#6c6c7c] bg-[#dcdcff] pr-[4px] pl-[7px]">
                <div className="-mr-[4px] -ml-[7px] flex h-[25px] items-center bg-linear-to-b from-[#b5d8ff] from-50% to-[#dcdcff] to-50% pt-[4px] pr-[5px] pl-[8px]">
                    <ChartIcon />
                    <h2 className="ml-[3px] flex-1 truncate text-[9px] leading-[14px] text-[#66667a]">USDX,Daily</h2>
                    <WindowButtons />
                </div>
                <DailyChart />
            </section>
            <section className="relative border-t-[3px] border-b border-[#88ac9c] border-b-black bg-[#b5dcff] pr-[3px] pl-[8px]">
                <div className="-mx-[3px] -ml-[8px] flex h-[18px] items-center bg-linear-to-b from-[#a0b8ff] via-[#b4b0ff] to-[#b0d4ff] pr-[3px] pl-[8px]">
                    <ChartIcon />
                    <h2 className="ml-[4px] flex-1 truncate text-[9px] leading-[14px] text-[#15152a]">USDX,M15</h2>
                    <WindowButtons active />
                </div>
                <M15Chart />
                <div className="-ml-[8px] h-[6px] border-b border-[#30d0f0]" />
                <button aria-label="TeamViewer" className="absolute right-0 bottom-[6px]">
                    <svg viewBox="0 0 20 42" className="h-[42px] w-[20px]">
                        <path d="M3 0h17v42L0 31V3z" fill="#565668" />
                        <rect x={4} y={5} width={16} height={16} rx={2} fill="#0d6fb8" />
                        <circle cx={12} cy={13} r={6} fill="#565668" />
                        <path d="M7 13l3-3v2h4v-2l3 3-3 3v-2h-4v2z" fill="#1590e0" />
                    </svg>
                </button>
            </section>
        </main>
        <div className="h-[4px] border-t border-[#88888c] bg-[#d0d0ea]" />

        <ChartTabs />
        <StatusBar />
        <Taskbar />

        <button aria-label="Keyboard" className="absolute right-[8px] bottom-0">
            <svg viewBox="0 0 74 35" className="h-[35px] w-[74px]">
                <circle cx={37} cy={36} r={34.500} fill="#000" stroke="#fff" strokeWidth={1.500} />
                <path d="M31 12l6-4 6 4" fill="none" stroke="#fff" />
                <rect x={17} y={14} width={41} height={19} fill="#fff" />
                <path d="M20 17.500h36M20 22.500h36" stroke="#000" strokeWidth={3} strokeDasharray="3 2" />
                <path d="M20 28.500h3M25 28.500h25M52 28.500h3" stroke="#000" strokeWidth={3} />
            </svg>
        </button>
    </div>
);

export default App;
